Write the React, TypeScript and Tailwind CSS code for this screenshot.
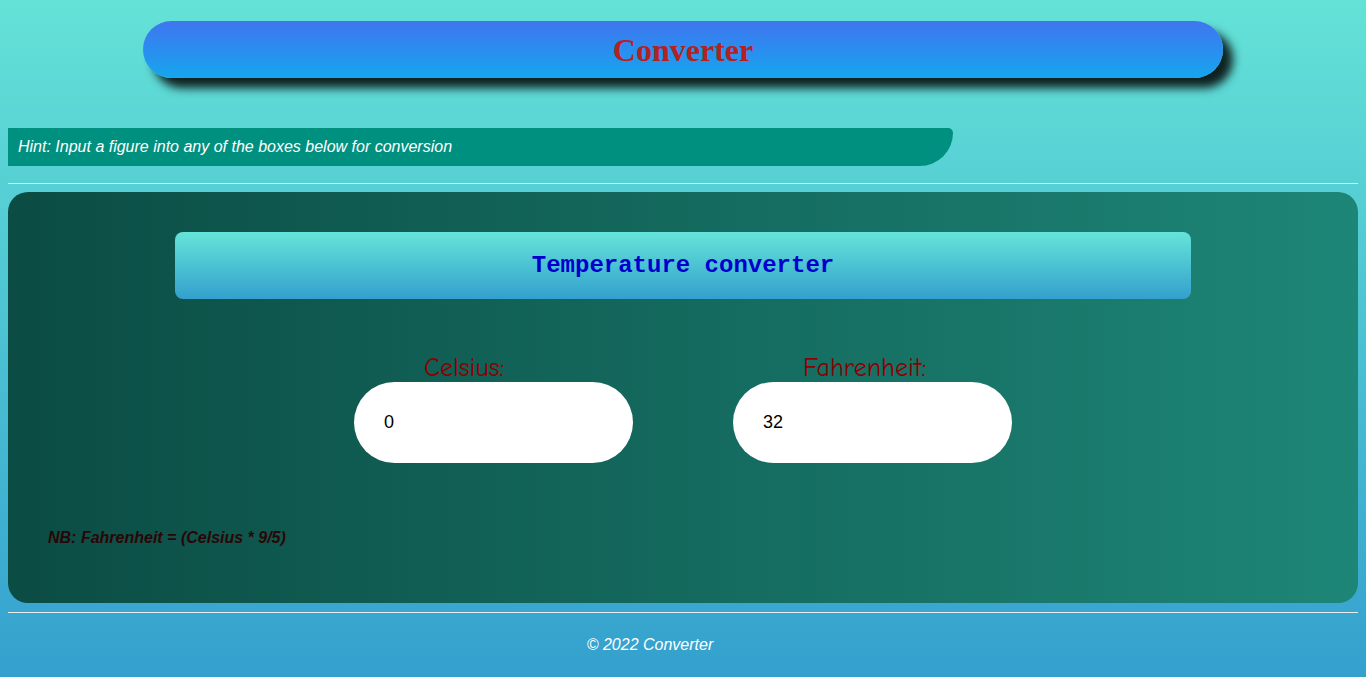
import React, { useState } from "react";

export default function App() {
  const [c, setC] = useState("0");
  const [f, setF] = useState("32");
  return (
    <div
      className="min-h-[677px] w-full px-2 pt-[21px] pb-[8px] bg-[linear-gradient(to_bottom,#64e2d7,#34a0ce)]"
      style={{ fontFamily: '"Liberation Sans", Arial, sans-serif' }}
    >
      <div className="mx-auto w-[1080px] h-[57px] rounded-full bg-[linear-gradient(to_bottom,#4075f0,#15a6ee)] shadow-[10px_10px_10px_rgba(0,0,0,0.85)] flex items-center justify-center">
        <h1
          className="text-[32px] font-bold text-[#b22222] leading-none"
          style={{ fontFamily: '"Liberation Serif", "Times New Roman", serif' }}
        >
          Converter
        </h1>
      </div>

      <div className="mt-[50px] w-[945px] h-[38px] bg-[#009080] rounded-br-[40px] rounded-tr-[6px] flex items-center pl-[10px]">
        <p className="italic text-white text-[16px]">
          Hint: Input a figure into any of the boxes below for conversion
        </p>
      </div>

      <div className="mt-[17px] h-px bg-[#c8c8c8] border-b border-[#eaeaea]" />

      <div className="mt-[8px] h-[411px] rounded-[20px] bg-[linear-gradient(to_right,#0b4c44,#1d8677)] pt-[40px] flex flex-col">
        <div className="mx-auto w-[1016px] h-[67px] rounded-[8px] bg-[linear-gradient(to_bottom,#65e4d9,#33a0cd)] flex items-center justify-center">
          <h2
            className="text-[24px] font-bold text-[#0000cd]"
            style={{ fontFamily: '"Liberation Mono", "Courier New", monospace' }}
          >
            Temperature converter
          </h2>
        </div>

        <div className="mt-[47px] flex justify-center gap-[100px]">
          <div className="flex flex-col">
            <label
              className="pl-[70px] pt-[9px] text-[26px] leading-[27px] text-[#8b0000]"
              style={{ fontFamily: '"Comic Sans MS", "Comic Neue", cursive' }}
            >
              Celsius:
            </label>
            <input
              value={c}
              onChange={(e) => setC(e.target.value)}
              className="w-[279px] h-[81px] rounded-full bg-white pl-[30px] text-[18px] text-black outline-none"
            />
          </div>
          <div className="flex flex-col">
            <label
              className="pl-[70px] pt-[9px] text-[26px] leading-[27px] text-[#8b0000]"
              style={{ fontFamily: '"Comic Sans MS", "Comic Neue", cursive' }}
            >
              Fahrenheit:
            </label>
            <input
              value={f}
              onChange={(e) => setF(e.target.value)}
              className="w-[279px] h-[81px] rounded-full bg-white pl-[30px] text-[18px] text-black outline-none"
            />
          </div>
        </div>

        <p className="mt-[63px] ml-[40px] italic font-bold text-[16px] text-[#2a0606]">
          NB: Fahrenheit = (Celsius * 9/5)
        </p>
      </div>

      <div className="mt-[9px] h-px bg-[#c8c8c8] border-b border-[#eaeaea]" />

      <p className="mt-[20px] pr-[66px] text-center italic text-white text-[16px]">
        © 2022 Converter
      </p>
    </div>
  );
}
